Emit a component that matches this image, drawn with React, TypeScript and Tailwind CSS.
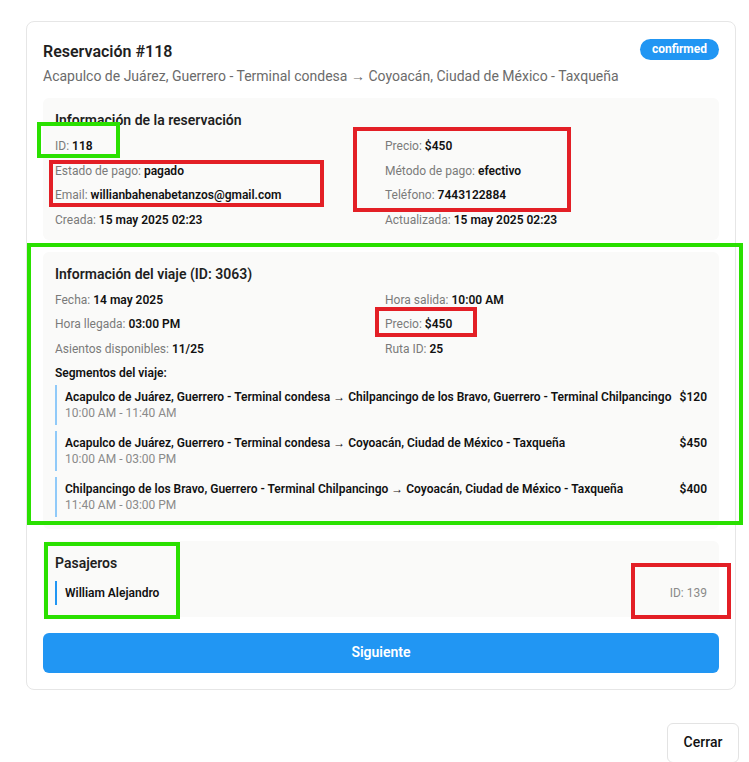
const reservation = [
  ["ID", "118"],
  ["Precio", "$450"],
  ["Estado de pago", "pagado"],
  ["Método de pago", "efectivo"],
  ["Email", "willianbahenabetanzos@gmail.com"],
  ["Teléfono", "7443122884"],
  ["Creada", "15 may 2025 02:23"],
  ["Actualizada", "15 may 2025 02:23"],
];

const trip = [
  ["Fecha", "14 may 2025"],
  ["Hora salida", "10:00 AM"],
  ["Hora llegada", "03:00 PM"],
  ["Precio", "$450"],
  ["Asientos disponibles", "11/25"],
  ["Ruta ID", "25"],
];

const segments = [
  {
    route:
      "Acapulco de Juárez, Guerrero - Terminal condesa → Chilpancingo de los Bravo, Guerrero - Terminal Chilpancingo",
    time: "10:00 AM - 11:40 AM",
    price: "$120",
  },
  {
    route: "Acapulco de Juárez, Guerrero - Terminal condesa → Coyoacán, Ciudad de México - Taxqueña",
    time: "10:00 AM - 03:00 PM",
    price: "$450",
  },
  {
    route: "Chilpancingo de los Bravo, Guerrero - Terminal Chilpancingo → Coyoacán, Ciudad de México - Taxqueña",
    time: "11:40 AM - 03:00 PM",
    price: "$400",
  },
];

function Field({ label, value }: { label: string; value: string }) {
  return (
    <p className="whitespace-nowrap text-[12px] leading-4">
      <span className="text-[#7a7a7a]">{label}: </span>
      <span className="font-semibold text-[#111]">{value}</span>
    </p>
  );
}

export default function App() {
  return (
    <div className="relative h-[762px] w-[749px] overflow-hidden bg-white font-['Roboto',sans-serif] text-[#1f1f1f]">
      <div className="pl-[26px] pt-[21px]">
        <div className="w-[710px] rounded-lg border border-[#e6e6e6] bg-white p-4">
          {/* Header */}
          <div className="flex items-start justify-between">
            <h2 className="pt-0.5 text-[16px] font-semibold leading-6">Reservación #118</h2>
            <span className="mt-px rounded-full bg-[#2196f3] px-3 text-[12px] font-bold leading-[21px] text-white">
              confirmed
            </span>
          </div>
          <p className="mt-0.5 text-[14px] leading-5 text-[#6b6b6b]">
            Acapulco de Juárez, Guerrero - Terminal condesa → Coyoacán, Ciudad de México - Taxqueña
          </p>

          {/* Reservation info */}
          <div className="mt-3 rounded-md bg-[#fafaf9] p-3">
            <h3 className="text-[14px] font-semibold leading-5">Información de la reservación</h3>
            <div className="mt-2 grid grid-cols-2 gap-x-2 gap-y-[8.5px]">
              {reservation.map(([l, v]) => (
                <Field key={l} label={l} value={v} />
              ))}
            </div>
          </div>

          {/* Trip info */}
          <div className="mt-3 rounded-md bg-[#fafaf9] p-3">
            <h3 className="text-[14px] font-semibold leading-5">Información del viaje (ID: 3063)</h3>
            <div className="mt-2 grid grid-cols-2 gap-x-2 gap-y-[8.5px]">
              {trip.map(([l, v]) => (
                <Field key={l + v} label={l} value={v} />
              ))}
            </div>
            <p className="mt-2 text-[12px] font-semibold leading-4 text-[#111]">Segmentos del viaje:</p>
            <div className="mt-1 flex flex-col gap-1.5">
              {segments.map((s) => (
                <div key={s.route} className="flex justify-between border-l-2 border-[#90caf9] py-1 pl-2">
                  <div>
                    <p className="whitespace-nowrap text-[12px] font-semibold leading-4 text-[#111]">{s.route}</p>
                    <p className="text-[12px] leading-4 text-[#8a8a8a]">{s.time}</p>
                  </div>
                  <span className="text-[12px] font-semibold leading-4 text-[#111]">{s.price}</span>
                </div>
              ))}
            </div>
          </div>

          {/* Passengers */}
          <div className="mt-3 rounded-md bg-[#fafaf9] p-3">
            <h3 className="text-[14px] font-semibold leading-5">Pasajeros</h3>
            <div className="mt-2 flex items-center justify-between border-l-2 border-[#2196f3] py-1 pl-2">
              <span className="text-[12px] font-semibold leading-4 text-[#111]">William Alejandro</span>
              <span className="text-[12px] leading-4 text-[#8a8a8a]">ID: 139</span>
            </div>
          </div>

          <button className="mt-4 h-10 w-full rounded-md bg-[#2196f3] text-[14px] font-semibold text-white">
            Siguiente
          </button>
        </div>
      </div>

      <div className="flex justify-end pr-[10px] pt-[33px]">
        <button className="h-10 w-[72px] rounded-md border border-[#e3e3e3] bg-white text-[14px] font-medium text-[#111]">
          Cerrar
        </button>
      </div>

      {/* Review annotations */}
      <div className="absolute left-[37px] top-[122px] h-[36px] w-[83px] border-4 border-[#2ae000]" />
      <div className="absolute left-[49px] top-[160px] h-[47px] w-[275px] border-4 border-[#e31f26]" />
      <div className="absolute left-[353px] top-[127px] h-[85px] w-[218px] border-4 border-[#e31f26]" />
      <div className="absolute left-[27px] top-[243px] h-[282px] w-[716px] border-4 border-[#2ae000]" />
      <div className="absolute left-[375px] top-[307px] h-[30px] w-[102px] border-4 border-[#e31f26]" />
      <div className="absolute left-[44px] top-[542px] h-[77px] w-[136px] border-4 border-[#2ae000]" />
      <div className="absolute left-[631px] top-[563px] h-[56px] w-[100px] border-4 border-[#e31f26]" />
    </div>
  );
}
